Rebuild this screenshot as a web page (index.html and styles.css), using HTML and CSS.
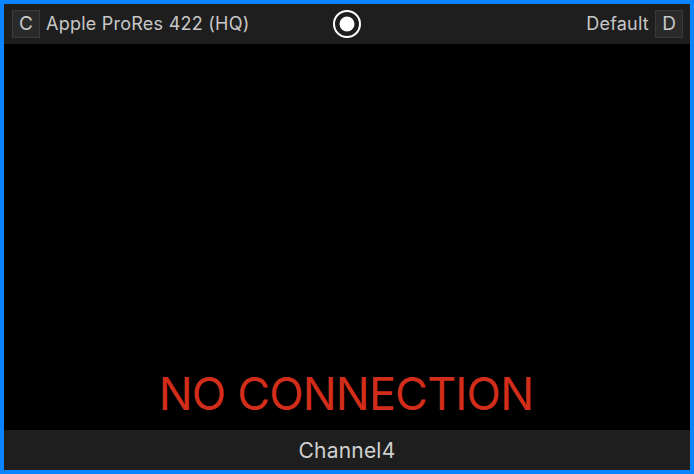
FILE: index.html
```html
<!DOCTYPE html>
<html lang="en">
<head>
    <meta charset="UTF-8">
    <title>Channel4</title>
    <link rel="stylesheet" href="styles.css">
</head>
<body>

<div class="monitor">
    <div class="top-bar">
        <div class="top-side">
            <span class="key">C</span>
            <span class="label">Apple ProRes 422 (HQ)</span>
        </div>
        <svg class="record" width="28" height="28" viewBox="0 0 28 28">
            <circle cx="14" cy="14" r="13" fill="none" stroke="#fff" stroke-width="2"/>
            <circle cx="14" cy="14" r="7.5" fill="#fff"/>
        </svg>
        <div class="top-side top-side-right">
            <span class="label">Default</span>
            <span class="key">D</span>
        </div>
    </div>

    <div class="screen">
        <div class="status">NO CONNECTION</div>
    </div>

    <div class="bottom-bar">Channel4</div>
</div>

</body>
</html>
```

FILE: styles.css
```css
html, body {
    height: 100%;
}

body {
    margin: 0;
    background-color: #000;
    font-family: Inter, "Liberation Sans", sans-serif;
}

.monitor {
    display: flex;
    flex-direction: column;
    height: 100%;
    box-sizing: border-box;
    border: 4px solid #0a84ff;
}

.top-bar {
    height: 40px;
    display: flex;
    align-items: center;
    justify-content: space-between;
    padding: 0 7px 0 8px;
    background-color: #1e1e1e;
}

.top-side {
    flex: 1;
    display: flex;
    align-items: center;
    gap: 6px;
}

.top-side-right {
    justify-content: flex-end;
}

.label {
    font-size: 18px;
    letter-spacing: 0.24px;
    line-height: 22px;
    margin-bottom: 1px;
    color: #c8c8c8;
}

.key {
    width: 26px;
    height: 26px;
    display: flex;
    align-items: center;
    justify-content: center;
    font-size: 19px;
    line-height: 24px;
    color: #c8c8c8;
    background-color: #2a2a2a;
    border: 1px solid #3a3a3a;
}

.record {
    display: block;
    margin-left: -1px;
}

.screen {
    flex: 1;
    display: flex;
    flex-direction: column;
    justify-content: flex-end;
    align-items: center;
    background-color: #000;
}

.status {
    font-size: 45px;
    letter-spacing: -0.85px;
    line-height: 54px;
    margin: 0 2px 9px 0;
    color: #d22d1a;
}

.bottom-bar {
    height: 40px;
    display: flex;
    align-items: center;
    justify-content: center;
    font-size: 21px;
    letter-spacing: 0.2px;
    color: #d0d0d0;
    background-color: #1e1e1e;
}
```
